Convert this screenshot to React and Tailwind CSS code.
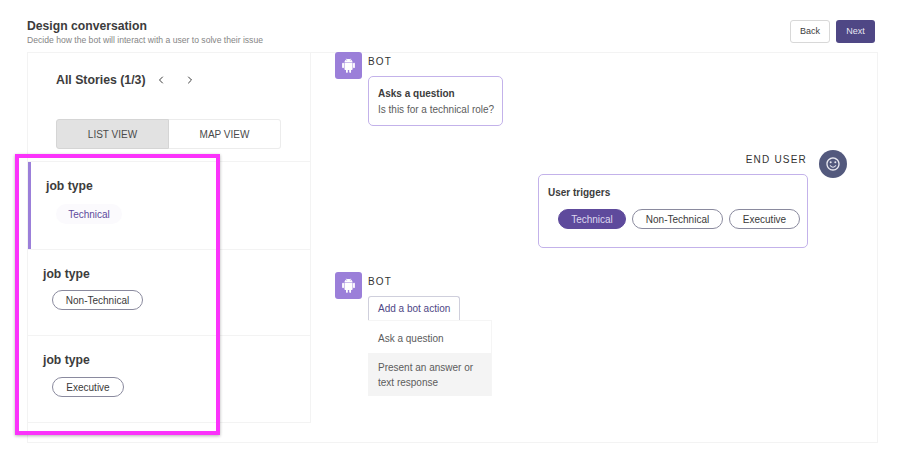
import { ChevronLeft, ChevronRight } from "lucide-react";
import { AiFillAndroid } from "react-icons/ai";
import { MdOutlineSentimentSatisfiedAlt } from "react-icons/md";

const stories = [
  { label: "Technical", active: true },
  { label: "Non-Technical", width: "w-[91px]", gap: "mt-[8px]" },
  { label: "Executive", width: "w-[72px]", gap: "mt-[9px]" },
];

function Pill({ children, active, className = "" }) {
  return (
    <span
      className={`flex h-[20px] items-center justify-center rounded-full border text-[10px] ${
        active ? "border-[#5e4a9c] bg-[#5e4a9c] text-[#ddd7ef]" : "border-[#8a8a9e] bg-white text-[#3a3a3a]"
      } ${className}`}
    >
      {children}
    </span>
  );
}

function BotAvatar() {
  return (
    <div className="flex h-[27px] w-[27px] shrink-0 items-center justify-center rounded-[3px] bg-[#9b7fd9] text-white">
      <AiFillAndroid size={17} />
    </div>
  );
}

function StoryRow({ story }) {
  if (story.active) {
    return (
      <div className="h-[87px] border-l-[3px] border-[#9b7fd9] pl-[15px] pt-[17px]">
        <p className="text-[12.2px] leading-[15px] font-bold text-[#3c3c3c]">job type</p>
        <span className="mt-[10px] ml-[10px] flex h-[20px] w-[66px] items-center justify-center rounded-full bg-[#fbfafd] text-[10px] text-[#5e4a9c]">
          {story.label}
        </span>
      </div>
    );
  }
  return (
    <div className="h-[86px] border-t border-[#f3f3f3] pl-[15px] pt-[16px] last:h-[87px]">
      <p className="text-[12.2px] leading-[16px] font-bold text-[#3c3c3c]">job type</p>
      <Pill className={`ml-[9px] ${story.gap} ${story.width}`}>{story.label}</Pill>
    </div>
  );
}

export default function App() {
  return (
    <div className="relative h-[449px] w-[910px] overflow-hidden bg-white font-['Liberation_Sans',Arial,sans-serif]">
      <header className="flex h-[52px] items-start justify-between pl-[27px] pr-[35px] pt-[18px]">
        <div>
          <h1 className="text-[12.2px] leading-[16px] font-bold text-[#3c3c3c]">Design conversation</h1>
          <p className="text-[8.6px] leading-[12px] text-[#858585]">Decide how the bot will interact with a user to solve their issue</p>
        </div>
        <div className="flex gap-[6px] pt-[2px]">
          <button className="h-[23px] w-[40px] rounded-[3px] border border-[#d8d8d8] bg-white text-[9px] text-[#3c3c3c]">Back</button>
          <button className="h-[23px] w-[39px] rounded-[3px] bg-[#4f4785] text-[9px] text-[#e8e6f2]">Next</button>
        </div>
      </header>

      <main className="ml-[27px] flex h-[391px] w-[851px] border border-[#f3f3f3]">
        <aside className="-mt-px w-[283px] shrink-0">
          <section className="h-[110px] w-[283px] border-r border-b border-[#f3f3f3] pl-[28px]">
            <div className="flex items-center pt-[20px] text-[#3c3c3c]">
              <h2 className="text-[12.3px] leading-[16px] font-bold">All Stories (1/3)</h2>
              <ChevronLeft size={12} className="ml-[9px]" />
              <ChevronRight size={12} className="ml-[17px]" />
            </div>
            <div className="mt-[31px] flex h-[30px] w-[225px] text-[10px] text-[#4a4a4a]">
              <span className="flex w-[113px] items-center justify-center rounded-l-[3px] border border-[#d5d5d5] bg-[#e2e2e2]">LIST VIEW</span>
              <span className="flex flex-1 items-center justify-center rounded-r-[3px] border border-l-0 border-[#ececec] bg-white">MAP VIEW</span>
            </div>
          </section>
          <section className="w-[283px] border-r border-b border-[#f3f3f3]">
            {stories.map((s) => (
              <StoryRow key={s.label} story={s} />
            ))}
          </section>
        </aside>

        <div className="-mt-px flex-1 pl-[24px]">
          <div className="flex gap-[6px]">
            <BotAvatar />
            <div>
              <p className="pt-[4px] text-[10px] leading-[12px] tracking-[1.2px] text-[#333333]">BOT</p>
              <div className="mt-[8px] h-[50px] w-[135px] rounded-[5px] border border-[#c3b2ea] pl-[9px] pt-[10px]">
                <p className="text-[10px] leading-[14px] font-bold text-[#3c3c3c]">Asks a question</p>
                <p className="mt-[1px] text-[10px] leading-[15px] text-[#5c5c5c]">Is this for a technical role?</p>
              </div>
            </div>
          </div>

          <div className="mt-[24px] flex flex-col items-end pr-[30px]">
            <div className="flex items-start gap-[12px]">
              <p className="pt-[4px] text-[10px] leading-[12px] tracking-[1.2px] text-[#333333]">END USER</p>
              <div className="flex h-[28px] w-[28px] items-center justify-center rounded-full bg-[#53597d] text-[#e8e8f0]">
                <MdOutlineSentimentSatisfiedAlt size={16} />
              </div>
            </div>
            <div className="mt-[-4px] mr-[39px] h-[74px] w-[270px] rounded-[5px] border border-[#c3b2ea] pl-[9px] pt-[11px]">
              <p className="text-[10px] leading-[14px] font-bold text-[#3c3c3c]">User triggers</p>
              <div className="mt-[9px] flex gap-[6px] pl-[10px]">
                <Pill active className="w-[68px]">Technical</Pill>
                <Pill className="w-[91px]">Non-Technical</Pill>
                <Pill className="w-[71px]">Executive</Pill>
              </div>
            </div>
          </div>

          <div className="mt-[24px] flex gap-[6px]">
            <BotAvatar />
            <div>
              <p className="pt-[4px] text-[10px] leading-[12px] tracking-[1.2px] text-[#333333]">BOT</p>
              <div className="mt-[8px] flex h-[24px] w-[92px] items-center rounded-t-[3px] border border-b-0 border-[#cfcfdc] pl-[9px] text-[10px] text-[#4f4785]">
                Add a bot action
              </div>
              <ul className="w-[124px] border-t border-r border-[#f5f5f5] text-[10px] leading-[15px] text-[#5c5c5c]">
                <li className="flex h-[32px] items-center pl-[10px] pt-[3px]">Ask a question</li>
                <li className="h-[43px] bg-[#f4f4f4] pl-[10px] pt-[7px] pr-[6px]">Present an answer or text response</li>
              </ul>
            </div>
          </div>
        </div>
      </main>

      {/* annotation drawn over the screenshot */}
      <div className="pointer-events-none absolute left-[15px] top-[154px] h-[281px] w-[205px] border-[4px] border-[#fb33fb] shadow-[0_1px_3px_rgba(0,0,0,0.3)]" />
    </div>
  );
}
